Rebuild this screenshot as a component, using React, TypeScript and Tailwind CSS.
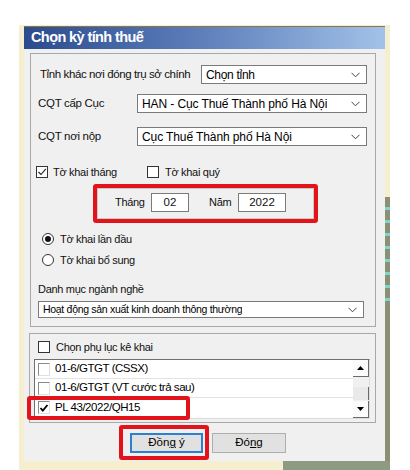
import type { ReactNode } from "react"

const font = { fontFamily: '"Liberation Sans", Arial, sans-serif' }

function Chevron() {
    return (
        <svg width="9" height="6" viewBox="0 0 9 6" className="shrink-0">
            <polyline points="0.5,0.8 4.5,4.8 8.5,0.8" fill="none" stroke="#444" strokeWidth="1" />
        </svg>
    )
}

function Select({ value, className }: { value: string; className: string }) {
    return (
        <div className={`flex items-center justify-between bg-white border border-[#7a7a7a] pl-[4px] pr-[6px] text-black ${className}`}>
            <span className="truncate">{value}</span>
            <Chevron />
        </div>
    )
}

function Check({ checked }: { checked?: boolean }) {
    return (
        <div className="w-[12px] h-[12px] bg-white border border-[#333] flex items-center justify-center shrink-0">
            {checked && (
                <svg width="10" height="10" viewBox="0 0 10 10">
                    <polyline points="1.5,5 4,7.5 8.8,1.8" fill="none" stroke="#222" strokeWidth="1.1" />
                </svg>
            )}
        </div>
    )
}

function Radio({ checked }: { checked?: boolean }) {
    return (
        <div className="w-[12px] h-[12px] rounded-full bg-white border border-[#333] flex items-center justify-center shrink-0">
            {checked && <div className="w-[6px] h-[6px] rounded-full bg-[#111]" />}
        </div>
    )
}

function ListCheck({ checked }: { checked?: boolean }) {
    return (
        <div className="w-[12px] h-[13px] bg-white border-l border-t border-[#8a8a8a] border-r border-b border-r-[#e0e0e0] border-b-[#e0e0e0] flex items-center justify-center shrink-0">
            {checked && (
                <svg width="10" height="10" viewBox="0 0 10 10">
                    <polyline points="1.5,5 3.8,7.6 8.5,2" fill="none" stroke="#000" strokeWidth="1.8" />
                </svg>
            )}
        </div>
    )
}

function ListRow({ children, checked, last }: { children: ReactNode; checked?: boolean; last?: boolean }) {
    return (
        <div className={`h-[19px] flex items-center gap-[5px] pl-[3px] ${last ? "" : "border-b border-[#e3e3e3]"}`}>
            <ListCheck checked={checked} />
            <span className="text-[11.5px] text-black tracking-[-0.45px]">{children}</span>
        </div>
    )
}

function ScrollArrow({ up }: { up?: boolean }) {
    return (
        <div className="h-[17px] bg-[#fbfbfb] border-r border-b border-[#6a6a6a] flex items-center justify-center">
            <svg width="7" height="4" viewBox="0 0 7 4">
                <polygon points={up ? "0,4 7,4 3.5,0" : "0,0 7,0 3.5,4"} fill="#000" />
            </svg>
        </div>
    )
}

export default function App() {
    return (
        <div className="relative w-[410px] h-[470px] bg-white overflow-hidden" style={font}>
            {/* backdrop behind the dialog */}
            <div className="absolute left-[19px] top-[25px] w-[371px] h-[445px] bg-[#f6efcf]" />
            <div className="absolute left-[385px] top-[197px] w-[5px] h-[273px] bg-[#8b8f74]">
                {[0, 1, 2, 3, 4, 5, 6, 7].map(i => (
                    <div key={i} className="h-[3px] mt-[10px] bg-[#7fd6c6]" />
                ))}
            </div>
            <div className="absolute left-[283px] top-[461px] w-[107px] h-[9px] bg-[#8f9a82]" />

            {/* dialog */}
            <div className="relative ml-[24px] mt-[26px] w-[361px] h-[435px] bg-[#f0f0f0] border-t border-[#8a7848] flex flex-col">
                <div className="h-[22px] bg-gradient-to-r from-[#2b4b8e] via-[#5f80bb] to-[#a3c2e9] flex items-center pl-[7px]">
                    <span className="text-white text-[14.5px] font-bold tracking-[-0.6px]">Chọn kỳ tính thuế</span>
                </div>

                {/* group 1 */}
                <div className="mt-[4px] ml-[6px] w-[346px] h-[274px] border border-[#a8a8a8] flex flex-col pt-[11px] text-[11.5px] text-[#111]">
                    <div className="h-[19px] flex items-center">
                        <span className="ml-[9px] w-[161px] tracking-[-0.4px]">Tỉnh khác nơi đóng trụ sở chính</span>
                        <Select value="Chọn tỉnh" className="w-[166px] h-[19px] text-[12px] tracking-[-0.3px]" />
                    </div>
                    <div className="h-[19px] mt-[10px] flex items-center">
                        <span className="ml-[7px] w-[99px] tracking-[-0.3px]">CQT cấp Cục</span>
                        <Select value="HAN - Cục Thuế Thành phố Hà Nội" className="w-[230px] h-[19px] text-[12px] tracking-[-0.1px]" />
                    </div>
                    <div className="h-[19px] mt-[14px] flex items-center">
                        <span className="ml-[7px] w-[99px] tracking-[-0.3px]">CQT nơi nộp</span>
                        <Select value="Cục Thuế Thành phố Hà Nội" className="w-[230px] h-[19px] text-[12px] tracking-[-0.1px]" />
                    </div>

                    <div className="h-[12px] mt-[20px] flex items-center text-[11px]">
                        <div className="ml-[5px] flex items-center gap-[5px] w-[111px]">
                            <Check checked />
                            <span className="tracking-[-0.3px]">Tờ khai tháng</span>
                        </div>
                        <div className="flex items-center gap-[6px]">
                            <Check />
                            <span className="tracking-[-0.3px]">Tờ khai quý</span>
                        </div>
                    </div>

                    <div className="h-[19px] mt-[15px] flex items-center text-[11px]">
                        <span className="ml-[84px] w-[36px] tracking-[-0.3px]">Tháng</span>
                        <div className="w-[38px] h-[19px] bg-white border border-[#7a7a7a] flex items-center justify-center text-[11.5px]">02</div>
                        <span className="ml-[20px] w-[29px] tracking-[-0.3px]">Năm</span>
                        <div className="w-[48px] h-[19px] bg-white border border-[#7a7a7a] flex items-center justify-center text-[11.5px]">2022</div>
                    </div>

                    <div className="h-[14px] mt-[20px] flex items-center gap-[6px] ml-[11px] text-[11px]">
                        <Radio checked />
                        <span className="tracking-[-0.3px]">Tờ khai lần đầu</span>
                    </div>
                    <div className="h-[14px] mt-[7px] flex items-center gap-[6px] ml-[11px] text-[11px]">
                        <Radio />
                        <span className="tracking-[-0.3px]">Tờ khai bổ sung</span>
                    </div>

                    <div className="h-[14px] mt-[15px] ml-[7px] flex items-center text-[11px] tracking-[-0.3px]">Danh mục ngành nghề</div>
                    <Select value="Hoạt động sản xuất kinh doanh thông thường" className="mt-[5px] ml-[7px] w-[326px] h-[17px] text-[10.5px] tracking-[-0.3px]" />
                </div>

                {/* group 2 */}
                <div className="mt-[6px] ml-[5px] w-[347px] h-[90px] border border-[#a8a8a8] flex flex-col pt-[7px] text-[11px] text-[#111]">
                    <div className="h-[12px] ml-[8px] flex items-center gap-[6px]">
                        <Check />
                        <span className="tracking-[-0.3px]">Chọn phụ lục kê khai</span>
                    </div>
                    <div className="mt-[6px] ml-[4px] w-[336px] h-[60px] bg-white border-l border-t border-[#6e6e6e] border-r border-b border-r-[#dcdcdc] border-b-[#dcdcdc] flex">
                        <div className="flex-1 flex flex-col">
                            <ListRow>01-6/GTGT (CSSX)</ListRow>
                            <ListRow>01-6/GTGT (VT cước trả sau)</ListRow>
                            <ListRow checked last>PL 43/2022/QH15</ListRow>
                        </div>
                        <div className="w-[16px] flex flex-col bg-[#f0f0f0]">
                            <ScrollArrow up />
                            <div className="flex-1 flex flex-col justify-end pb-[1px]">
                                <div className="h-[13px] bg-[#e9e9e9] border-r border-[#6a6a6a]" />
                            </div>
                            <ScrollArrow />
                        </div>
                    </div>
                </div>

                {/* buttons */}
                <div className="mt-[10px] ml-[106px] flex gap-[9px] text-[11.5px] text-black">
                    <div className="w-[73px] h-[20px] bg-[#e1e1e1] border-2 border-[#2d7fd2] flex items-center justify-center">
                        <span>Đồn<span className="underline">g</span> ý</span>
                    </div>
                    <div className="w-[74px] h-[20px] bg-[#e1e1e1] border border-[#adadad] flex items-center justify-center">
                        <span>Đó<span className="underline">n</span>g</span>
                    </div>
                </div>
            </div>

            {/* red highlight marks */}
            <div className="absolute left-[93px] top-[184px] w-[225px] h-[39px] border-4 border-[#e3131b] rounded-[3px] shadow-[inset_0_0_0_1px_#c8c8c8]" />
            <div className="absolute left-[27px] top-[396px] w-[163px] h-[24px] border-4 border-[#e3131b] rounded-[3px]" />
            <div className="absolute left-[119px] top-[425px] w-[90px] h-[35px] border-4 border-[#e3131b] rounded-[3px]" />
        </div>
    )
}
